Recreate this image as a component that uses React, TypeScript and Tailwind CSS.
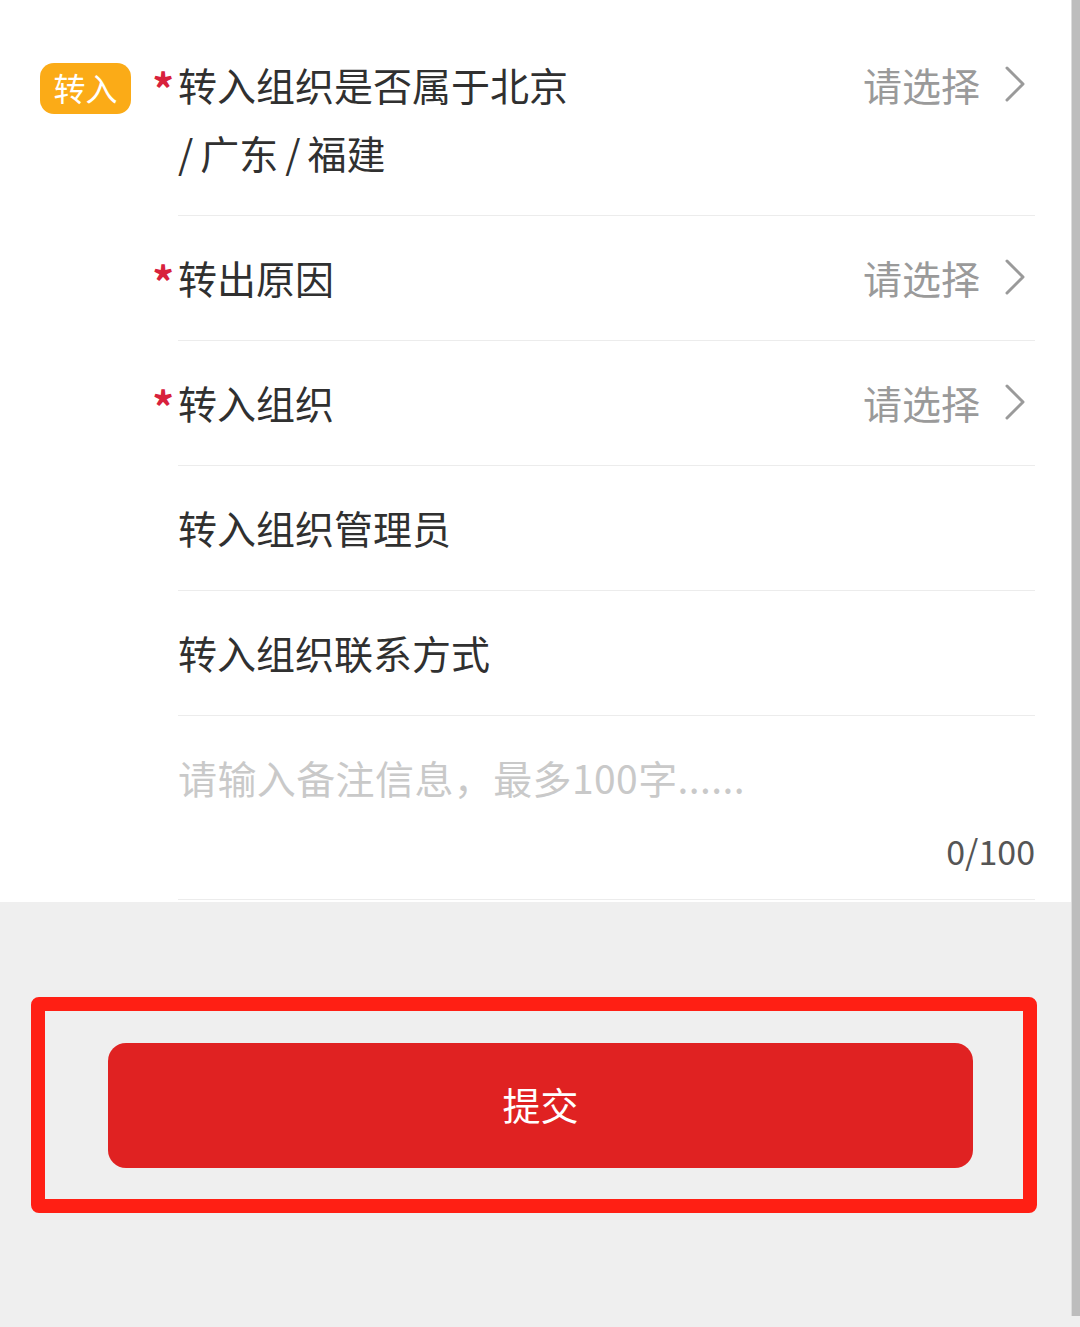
const rows = [
  { label: "转出原因", required: true, select: true },
  { label: "转入组织", required: true, select: true },
  { label: "转入组织管理员", required: false, select: false },
  { label: "转入组织联系方式", required: false, select: false },
];

function Chevron() {
  return (
    <svg width="20" height="36" viewBox="0 0 20 36" fill="none" className="ml-[25px] mr-[10px]">
      <polyline points="2,2 18,18 2,34" stroke="#9a9a9a" strokeWidth="3" strokeLinecap="round" strokeLinejoin="round" />
    </svg>
  );
}

function Select() {
  return (
    <div className="flex items-center h-[68px] shrink-0">
      <span className="text-[39px] leading-[68px] text-[#9a9a9a]">请选择</span>
      <Chevron />
    </div>
  );
}

function Star() {
  return <span className="mt-[3px] text-[43px] leading-[68px] font-bold text-[#d8213c] pr-[4px]">*</span>;
}

export default function App() {
  return (
    <div className="relative w-[1080px] h-[1327px] overflow-hidden bg-[#efefef] font-['Noto_Sans_CJK_SC','Noto_Sans',sans-serif]">
      {/* Form */}
      <div className="bg-white pt-[23px] pb-[2px]">
        <div className="grid grid-cols-[178px_1fr]">
          <div className="flex items-start justify-between pt-[27px]">
            <div className="ml-[40px] mt-[13px] w-[91px] h-[51px] rounded-[14px] bg-[#fbab17] flex items-center justify-center pb-[3px] text-[32px] leading-[40px] text-white">
              转入
            </div>
            <Star />
          </div>
          <div className="mr-[45px] border-b border-[#ececec] pt-[27px] pb-[29px] flex items-start justify-between">
            <div className="text-[39px] leading-[68px] text-[#303030]">
              转入组织是否属于北京
              <br />
              <span className="pr-[7px]">/</span>广东<span className="px-[7px]">/</span>福建
            </div>
            <Select />
          </div>
        </div>

        {rows.map((row) => (
          <div key={row.label} className="grid grid-cols-[178px_1fr]">
            <div className="flex items-start justify-end pt-[27px]">{row.required && <Star />}</div>
            <div className="mr-[45px] border-b border-[#ececec] pt-[27px] pb-[29px] flex items-start justify-between">
              <span className="text-[39px] leading-[68px] text-[#303030]">{row.label}</span>
              {row.select && <Select />}
            </div>
          </div>
        ))}

        {/* Remark */}
        <div className="ml-[178px] mr-[45px] border-b border-[#ececec] pt-[27px] pb-[24px] flex flex-col">
          <span className="text-[39px] leading-[68px] tracking-[0.4px] text-[#c9c9c9]">请输入备注信息，最多100字......</span>
          <span className="mt-[16px] self-end text-[34px] leading-[48px] text-[#555555]">0/100</span>
        </div>
      </div>

      {/* Submit */}
      <div className="pt-[95px]">
        <div className="ml-[31px] mr-[43px] rounded-[8px] border-[14px] border-[#ff1f14] pt-[32px] pb-[31px]">
          <button className="ml-[63px] mr-[50px] w-[865px] h-[125px] rounded-[18px] bg-[#e02222] pb-[4px] text-[38px] text-white flex items-center justify-center">
            提交
          </button>
        </div>
      </div>

      {/* Scrollbar */}
      <div className="absolute right-0 top-0 w-[9px] h-[1316px] bg-[#bdbdbd] border-l border-[#dcdcdc]" />
    </div>
  );
}
